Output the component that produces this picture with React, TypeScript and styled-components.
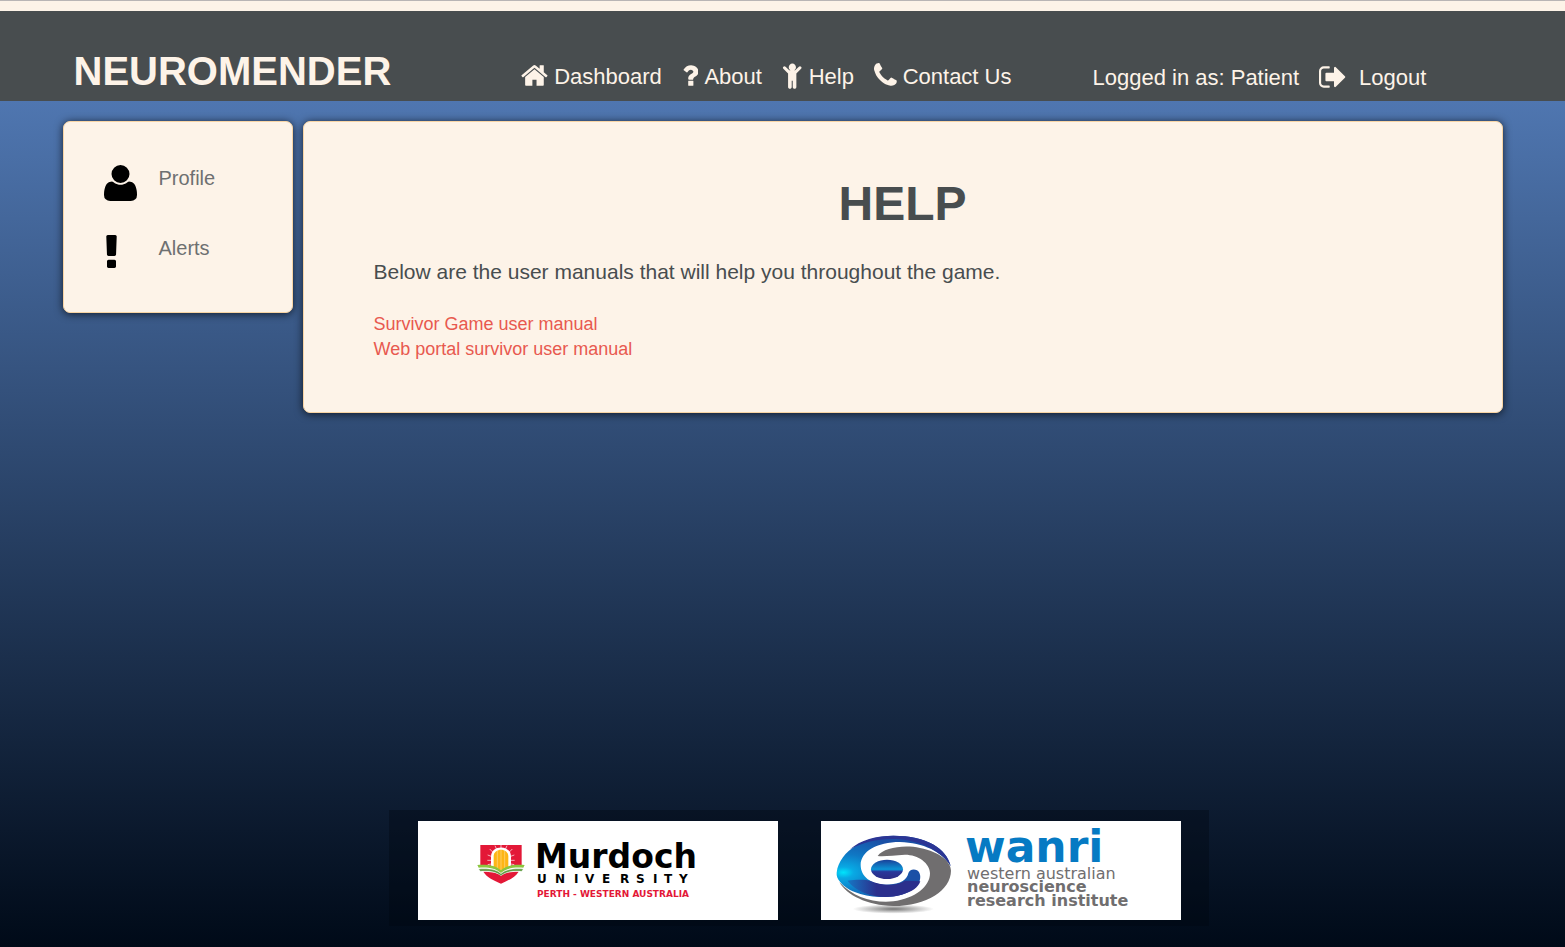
import React from "react";
import styled, { createGlobalStyle } from "styled-components";

const cream = "#fdf3e8";
const slate = "#484d4f";

const GlobalStyle = createGlobalStyle`
  * { box-sizing: border-box; }
  body {
    margin: 0;
    font-family: "Liberation Sans", Arial, sans-serif;
    color: ${slate};
  }
  h1, p, ul { margin: 0; padding: 0; }
  ul { list-style: none; }
  a { text-decoration: none; }
`;

const Page = styled.div`
  min-height: 100vh;
  display: flex;
  flex-direction: column;
  border-top: 1px solid #b9b5b5;
`;

const TopStrip = styled.div`
  height: 10px;
  background: ${cream};
`;

const Header = styled.header`
  background: ${slate};
  height: 90px;
  padding-top: 36px;
`;

const Container = styled.div`
  max-width: 1440px;
  margin: 0 auto;
`;

const HeaderRow = styled(Container)`
  display: flex;
  align-items: flex-start;
  padding-left: 11px;
`;

const Brand = styled.a`
  font-size: 40px;
  line-height: 48px;
  font-weight: bold;
  color: ${cream};
`;

const Nav = styled.nav`
  display: flex;
  gap: 20px;
  margin: 14px 0 0 130px;
`;

const HeaderLink = styled.a<{ $gap?: number }>`
  display: flex;
  align-items: flex-start;
  gap: ${(p) => p.$gap ?? 6}px;
  font-size: 22px;
  line-height: 32px;
  white-space: nowrap;
  color: ${cream};
`;

const Session = styled.div`
  display: flex;
  align-items: flex-start;
  gap: 20px;
  margin: 15px 0 0 81px;
  font-size: 22px;
  line-height: 32px;
  white-space: nowrap;
  color: ${cream};
`;

const Glyph = styled.svg<{ $size: number }>`
  height: ${(p) => p.$size}px;
  width: auto;
  flex: none;
  fill: currentColor;
`;

const Body = styled.div`
  flex: 1;
  display: flex;
  flex-direction: column;
  background: linear-gradient(#4f76b0, #000a18);
`;

const Columns = styled(Container)`
  width: 100%;
  display: flex;
  align-items: flex-start;
  gap: 10px;
  padding-top: 20px;
`;

const Card = styled.div`
  background: ${cream};
  border: 1px solid #f8d4a4;
  border-radius: 7px;
  box-shadow: 0 1px 8px rgba(0, 0, 0, 0.7);
`;

const Sidebar = styled(Card)`
  width: 230px;
  flex: none;
  padding: 40px 40px 38px;
`;

const SideList = styled.ul`
  display: flex;
  flex-direction: column;
  gap: 28px;
`;

const SideLink = styled.a`
  display: grid;
  grid-template-columns: 55px 1fr;
  height: 42px;
  font-size: 20px;
  line-height: 32px;
  color: #6e7071;
  svg { color: #000; }
`;

const Main = styled(Card)`
  flex: 1;
  padding: 52px 70px 50px;
`;

const Title = styled.h1`
  font-size: 48px;
  line-height: 60px;
  text-align: center;
  margin-bottom: 23px;
`;

const Intro = styled.p`
  font-size: 21px;
  line-height: 30px;
  margin-bottom: 25px;
`;

const ManualItem = styled.li`
  font-size: 18px;
  line-height: 25px;
  a { color: #e8594f; }
`;

const Footer = styled.footer`
  margin-top: auto;
  padding: 40px 0 21px 33px;
  display: flex;
  justify-content: center;
`;

const Sponsors = styled.div`
  width: 820px;
  display: flex;
  justify-content: center;
  gap: 43px;
  padding: 11px 0 6px;
  background: rgba(0, 7, 14, 0.35);
`;

const SponsorLink = styled.a`
  display: block;
  height: 99px;
  background: #fff;
  svg { display: block; }
`;

type Icon = { box: string; d: string };

const icons: Record<string, Icon> = {
  home: {
    box: "64 0 1664 1792",
    d: "M1472 992v480q0 26-19 45t-45 19h-384v-384h-256v384h-384q-26 0-45-19t-19-45v-480q0-1 .5-3t.5-3l575-474 575 474q1 2 1 6zm223-69l-62 74q-8 9-21 11h-3q-13 0-21-7l-692-577-692 577q-12 8-24 7-13-2-21-11l-62-74q-8-10-7-23.5t11-21.5l719-599q32-26 76-26t76 26l244 204v-195q0-14 9-23t23-9h192q14 0 23 9t9 23v408l219 182q10 8 11 21.5t-7 23.5z",
  },
  question: {
    box: "384 0 1024 1792",
    d: "M1088 1256v240q0 16-12 28t-28 12h-240q-16 0-28-12t-12-28v-240q0-16 12-28t28-12h240q16 0 28 12t12 28zm316-600q0 54-15.5 101t-35 76.5-55 59.5-57.5 43.5-61 35.5q-41 23-68.5 65t-27.5 67q0 17-12 32.5t-28 15.5h-240q-15 0-25.5-18.5t-10.5-37.5v-45q0-83 65-156.5t143-108.5q59-27 84-56t25-76q0-42-46.5-74t-107.5-32q-65 0-108 29-35 25-107 115-13 16-31 16-12 0-25-8l-164-125q-13-10-15.5-25t5.5-28q160-266 464-266 80 0 161 31t146 83 106 127.5 41 158.5z",
  },
  child: {
    box: "256 0 1280 1792",
    d: "M1436 484l-292 292v824q0 46-33 79t-79 33-79-33-33-79v-384h-64v384q0 46-33 79t-79 33-79-33-33-79v-824l-292-292q-28-28-28-68t28-68q29-28 68.5-28t67.5 28l228 228h368l228-228q28-28 68-28t68 28q28 29 28 68.5t-28 67.5zm-316-100q0 93-65.5 158.5t-158.5 65.5-158.5-65.5-65.5-158.5 65.5-158.5 158.5-65.5 158.5 65.5 65.5 158.5z",
  },
  phone: {
    box: "192 0 1408 1792",
    d: "M1600 1240q0 27-10 70.5t-21 68.5q-21 50-122 106-94 51-186 51-27 0-52.5-3.5t-57.5-12.5-47.5-14.5-55.5-20.5-49-18q-98-35-175-83-128-79-264.5-215.5t-215.5-264.5q-48-77-83-175-3-9-18-49t-20.5-55.5-14.5-47.5-12.5-57.5-3.5-52.5q0-92 51-186 56-101 106-122 25-11 68.5-21t70.5-10q14 0 21 3 18 6 53 76 11 19 30 54t35 63.5 31 53.5q3 4 17.5 25t21.5 35.5 7 28.5q0 20-28.5 50t-62 55-62 53-28.5 46q0 9 5 22.5t8.5 20.5 14 24 11.5 19q76 137 174 235t235 174q2 1 19 11.5t24 14 20.5 8.5 22.5 5q18 0 46-28.5t53-62 55-62 50-28.5q14 0 28.5 7t35.5 21.5 25 17.5q25 15 53.5 31t63.5 35 54 30q70 35 76 53 3 7 3 21z",
  },
  signOut: {
    box: "64 0 1600 1792",
    d: "M704 1440q0 4 1 20t.5 26.5-3 23.5-10 19.5-20.5 6.5h-320q-119 0-203.5-84.5t-84.5-203.5v-704q0-119 84.5-203.5t203.5-84.5h320q13 0 22.5 9.5t9.5 22.5q0 4 1 20t.5 26.5-3 23.5-10 19.5-20.5 6.5h-320q-66 0-113 47t-47 113v704q0 66 47 113t113 47h312l11.5 1 11.5 3 8 5.5 7 9 2 13.5zm928-544q0 26-19 45l-544 544q-19 19-45 19t-45-19-19-45v-288h-448q-26 0-45-19t-19-45v-384q0-26 19-45t45-19h448v-288q0-26 19-45t45-19 45 19l544 544q19 19 19 45z",
  },
  user: {
    box: "0 0 1408 1792",
    d: "M1408 1405q0 120-73 189.5t-194 69.5h-874q-121 0-194-69.5t-73-189.5q0-53 3.5-103.5t14-109 26.5-108.5 43-97.5 62-81 85.5-53.5 111.5-20q9 0 42 21.5t74.5 48 108 48 133.5 21.5 133.5-21.5 108-48 74.5-48 42-21.5q61 0 111.5 20t85.5 53.5 62 81 43 97.5 26.5 108.5 14 109 3.5 103.5zM1088 512q0 159-112.5 271.5t-271.5 112.5-271.5-112.5-112.5-271.5 112.5-271.5 271.5-112.5 271.5 112.5 112.5 271.5z",
  },
  exclamation: {
    box: "576 0 640 1792",
    d: "M1088 1248v224q0 26-19 45t-45 19h-256q-26 0-45-19t-19-45v-224q0-26 19-45t45-19h256q26 0 45 19t19 45zm30-1056l-28 768q-1 26-20.5 45t-45.5 19h-256q-26 0-45.5-19t-20.5-45l-28-768q-1-26 17.5-45t44.5-19h320q26 0 44.5 19t17.5 45z",
  },
};

const navItems = [
  { icon: "home", label: "Dashboard" },
  { icon: "question", label: "About" },
  { icon: "child", label: "Help" },
  { icon: "phone", label: "Contact Us" },
];

const sideItems = [
  { icon: "user", label: "Profile" },
  { icon: "exclamation", label: "Alerts" },
];

const manuals = ["Survivor Game user manual", "Web portal survivor user manual"];

const LogoText = styled.text`
  font-family: "DejaVu Sans", Verdana, sans-serif;
`;

function MurdochLogo() {
  return (
    <svg width="360" height="99" viewBox="0 0 360 99" role="img" aria-label="Murdoch University">
      <g transform="translate(47 14) scale(0.3333)">
        <path d="M46 30H170V92L108 92L46 92Z" fill="#e31837" />
        <path d="M55 110C75 110 95 112 108 122C121 112 141 110 161 110C150 128 130 136 108 146C86 136 66 128 55 110Z" fill="#e31837" />
        <path d="M78 98V65C78 28 138 28 138 65V98L108 112Z" fill="#fff" />
        <path
          d="M108 42V30M95 43L90 32M121 43L126 32M84 52L74 42M132 52L142 42M79 64L68 60M137 64L148 60M79 76H67M137 76H149M79 87L68 89M137 87L148 89"
          stroke="#fff"
          strokeWidth="2"
        />
        <path d="M86 96V63C88 38 128 38 130 63V96L108 108Z" fill="#fdb515" />
        <path d="M97 48V100M108 44V106M119 48V100" stroke="#fff" strokeWidth="2" opacity="0.5" />
        <path d="M37 90C70 88 92 92 108 106C124 92 146 88 179 90L175 98C145 96 124 100 108 114C92 100 71 96 41 98Z" fill="#8cc63f" />
        <path d="M41 102C70 100 94 103 108 116C122 103 146 100 175 102L170 109C145 107 124 109 108 122C92 109 71 107 46 109Z" fill="#5f9b41" stroke="#fff" strokeWidth="1" />
      </g>
      <LogoText x="117" y="47" fontSize="33" fontWeight="bold" fill="#000">Murdoch</LogoText>
      <LogoText fontSize="12" fontWeight="bold" fill="#000" y="62" x="119 137 156 167 184 202 218 235 246 261">UNIVERSITY</LogoText>
      <LogoText x="119" y="76" fontSize="9" fontWeight="bold" fill="#e31837">PERTH - WESTERN AUSTRALIA</LogoText>
    </svg>
  );
}

function WanriLogo() {
  return (
    <svg width="360" height="99" viewBox="0 0 360 99" role="img" aria-label="Western Australian Neuroscience Research Institute">
      <defs>
        <radialGradient id="iris" cx="0.06" cy="0.6" r="0.6">
          <stop offset="0" stopColor="#00e4fb" />
          <stop offset="0.15" stopColor="#08a9e4" />
          <stop offset="0.5" stopColor="#0f78c4" />
          <stop offset="1" stopColor="#1a50a6" />
        </radialGradient>
        <linearGradient id="pupil" x1="0" y1="0" x2="0" y2="1">
          <stop offset="0" stopColor="#1b3f98" />
          <stop offset="0.5" stopColor="#0b94d6" />
          <stop offset="0.62" stopColor="#29379a" />
          <stop offset="1" stopColor="#2b2c85" />
        </linearGradient>
        <linearGradient id="lower" x1="0" y1="0" x2="1" y2="0">
          <stop offset="0" stopColor="#1677c4" />
          <stop offset="0.4" stopColor="#2b2f8c" />
        </linearGradient>
        <radialGradient id="shade">
          <stop offset="0" stopColor="#777" />
          <stop offset="1" stopColor="#fff" />
        </radialGradient>
      </defs>
      <g transform="translate(9 -1) scale(0.3333)">
        <ellipse cx="190" cy="267" rx="122" ry="14" fill="url(#shade)" />
        <path
          d="M20 158C28 90 110 47 190 47C290 47 350 85 362 138C335 95 280 68 210 66C140 66 92 95 92 135C92 170 125 195 170 194C215 194 232 176 235 160C238 145 262 145 268 158C278 180 262 210 215 224C150 242 60 225 30 185C22 175 19 168 20 158Z"
          fill="url(#iris)"
        />
        <path d="M190 47C290 47 350 85 362 138C335 95 280 66 210 58C150 54 100 66 60 88C90 60 140 47 190 47Z" fill="#2b3594" />
        <path d="M52 182C80 178 108 178 122 183C150 196 200 200 225 182L271 184C264 204 245 216 215 224C160 240 90 228 52 182Z" fill="url(#lower)" />
        <path
          d="M143 108C160 84 220 73 270 84C330 96 363 125 363 152C363 210 290 258 190 258C110 256 50 225 28 186C70 232 130 250 190 244C255 236 300 200 300 160C300 130 265 104 225 104C190 106 165 110 143 108Z"
          fill="#706e6f"
        />
        <ellipse cx="171" cy="148" rx="48" ry="29" fill="url(#pupil)" />
      </g>
      <LogoText x="144" y="41" fontSize="44" fontWeight="bold" fill="#067ac3">wanri</LogoText>
      <LogoText x="146" y="58" fontSize="16" fill="#706e6f">western australian</LogoText>
      <LogoText x="146" y="71" fontSize="16" fontWeight="bold" fill="#706e6f">neuroscience</LogoText>
      <LogoText x="146" y="85" fontSize="16" fontWeight="bold" fill="#706e6f">research institute</LogoText>
    </svg>
  );
}

export default function App() {
  return (
    <Page>
      <GlobalStyle />
      <TopStrip />
      <Header>
        <HeaderRow>
          <Brand href="#">NEUROMENDER</Brand>
          <Nav>
            {navItems.map((item) => (
              <HeaderLink href="#" key={item.label}>
                <Glyph $size={29} viewBox={icons[item.icon].box} aria-hidden="true">
                  <path d={icons[item.icon].d} />
                </Glyph>
                <span>{item.label}</span>
              </HeaderLink>
            ))}
          </Nav>
          <Session>
            <span>Logged in as: Patient</span>
            <HeaderLink href="#" $gap={13}>
              <Glyph $size={30} viewBox={icons.signOut.box} aria-hidden="true">
                <path d={icons.signOut.d} />
              </Glyph>
              <span>Logout</span>
            </HeaderLink>
          </Session>
        </HeaderRow>
      </Header>
      <Body>
        <Columns>
          <Sidebar as="aside">
            <SideList>
              {sideItems.map((item) => (
                <li key={item.label}>
                  <SideLink href="#">
                    <Glyph $size={42} viewBox={icons[item.icon].box} aria-hidden="true">
                      <path d={icons[item.icon].d} />
                    </Glyph>
                    <span>{item.label}</span>
                  </SideLink>
                </li>
              ))}
            </SideList>
          </Sidebar>
          <Main as="main">
            <Title>HELP</Title>
            <Intro>Below are the user manuals that will help you throughout the game.</Intro>
            <ul>
              {manuals.map((name) => (
                <ManualItem key={name}>
                  <a href="#">{name}</a>
                </ManualItem>
              ))}
            </ul>
          </Main>
        </Columns>
        <Footer>
          <Sponsors>
            <SponsorLink href="#"><MurdochLogo /></SponsorLink>
            <SponsorLink href="#"><WanriLogo /></SponsorLink>
          </Sponsors>
        </Footer>
      </Body>
    </Page>
  );
}
